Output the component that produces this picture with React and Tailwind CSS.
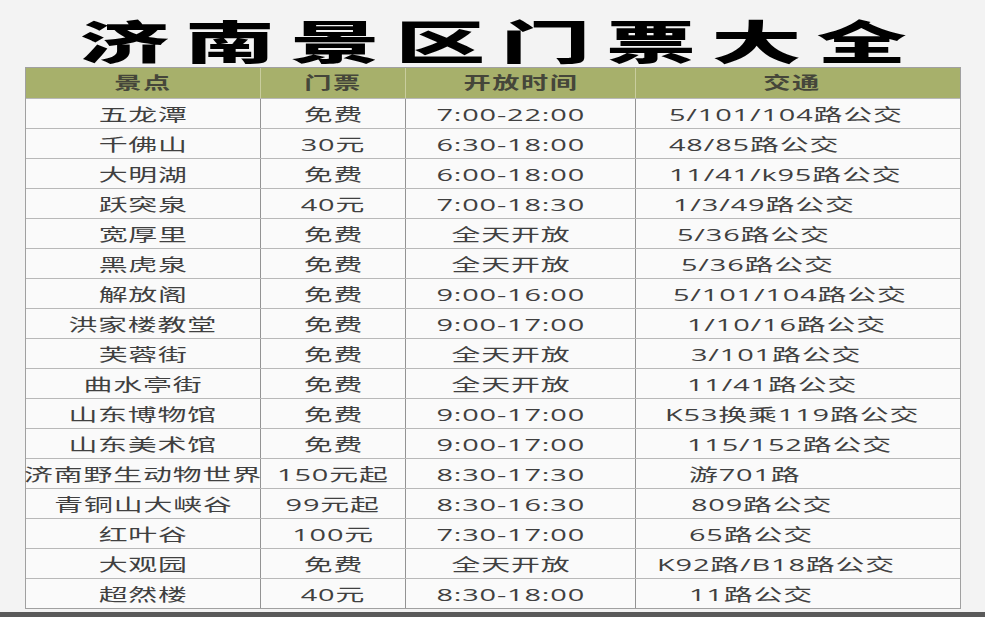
const rows = [
  ["五龙潭", "免费", "7:00-22:00", "5/101/104路公交", "pl-[33px]"],
  ["千佛山", "30元", "6:30-18:00", "48/85路公交", "pl-[33px]"],
  ["大明湖", "免费", "6:00-18:00", "11/41/k95路公交", "pl-[33px]"],
  ["跃突泉", "40元", "7:00-18:30", "1/3/49路公交", "pl-[37px]"],
  ["宽厚里", "免费", "全天开放", "5/36路公交", "pl-[41px]"],
  ["黑虎泉", "免费", "全天开放", "5/36路公交", "pl-[45px]"],
  ["解放阁", "免费", "9:00-16:00", "5/101/104路公交", "pl-[37px]"],
  ["洪家楼教堂", "免费", "9:00-17:00", "1/10/16路公交", "pl-[51px]"],
  ["芙蓉街", "免费", "全天开放", "3/101路公交", "pl-[55px]"],
  ["曲水亭街", "免费", "全天开放", "11/41路公交", "pl-[51px]"],
  ["山东博物馆", "免费", "9:00-17:00", "K53换乘119路公交", "pl-[29px]"],
  ["山东美术馆", "免费", "9:00-17:00", "115/152路公交", "pl-[51px]"],
  ["济南野生动物世界", "150元起", "8:30-17:30", "游701路", "pl-[53px]"],
  ["青铜山大峡谷", "99元起", "8:30-16:30", "809路公交", "pl-[55px]"],
  ["红叶谷", "100元", "7:30-17:00", "65路公交", "pl-[53px]"],
  ["大观园", "免费", "全天开放", "K92路/B18路公交", "pl-[21px]"],
  ["超然楼", "40元", "8:30-18:00", "11路公交", "pl-[53px]"],
];

const font = { fontFamily: '"Open Sans", "Noto Sans CJK SC", sans-serif' };

function Cell({ children, className = "" }) {
  return (
    <div className={"flex items-center h-full overflow-visible " + className}>
      <span className="inline-block whitespace-nowrap scale-x-[1.7] tracking-[0.5px] leading-none pt-[2px]">
        {children}
      </span>
    </div>
  );
}

export default function App() {
  return (
    <div
      className="w-[985px] h-[617px] bg-[#f3f3f3] flex flex-col overflow-hidden"
      style={font}
    >
      <div className="h-[67px] flex items-center justify-center pt-[10px]">
        <span
          className="inline-block whitespace-nowrap scale-x-[1.95] text-[46px] font-black leading-none text-black tracking-[8px] pl-[8px]"
          style={{ fontFamily: '"Noto Sans CJK SC", sans-serif' }}
        >
          济南景区门票大全
        </span>
      </div>

      <div className="ml-[25px] w-[936px] border border-[#a0a0a0] bg-[#fafafa]">
        <div className="grid grid-cols-[235px_145px_230px_1fr] h-[30px] bg-[#a7b06b] text-[17px] font-bold text-[#45463a]">
          <div className="flex items-center justify-center border-r border-[#c9cd9e]">
            <span className="inline-block scale-x-[1.6] tracking-[1px]">景点</span>
          </div>
          <div className="flex items-center justify-center border-r border-[#c9cd9e]">
            <span className="inline-block scale-x-[1.6] tracking-[1px]">门票</span>
          </div>
          <div className="flex items-center justify-center border-r border-[#c9cd9e]">
            <span className="inline-block scale-x-[1.6] tracking-[1px]">开放时间</span>
          </div>
          <div className="flex items-center justify-center pr-[12px]">
            <span className="inline-block scale-x-[1.6] tracking-[1px]">交通</span>
          </div>
        </div>

        {rows.map(([name, price, time, bus, pad], i) => (
          <div
            key={i}
            className="grid grid-cols-[235px_145px_230px_1fr] h-[30px] border-t border-[#b8b8b8] text-[17px] text-[#404040]"
          >
            <div className="border-r border-[#939393]">
              <Cell className="justify-center">{name}</Cell>
            </div>
            <div className="border-r border-[#939393]">
              <Cell className="justify-center">{price}</Cell>
            </div>
            <div className="border-r border-[#939393]">
              <Cell className="justify-center pr-[20px]">{time}</Cell>
            </div>
            <div className={"flex items-center " + pad}>
              <span className="inline-block whitespace-nowrap scale-x-[1.7] tracking-[0.5px] leading-none origin-left pt-[2px]">
                {bus}
              </span>
            </div>
          </div>
        ))}
      </div>

      <div className="flex-1" />
      <div className="h-[5px] bg-[#5a5a5a]" />
    </div>
  );
}
